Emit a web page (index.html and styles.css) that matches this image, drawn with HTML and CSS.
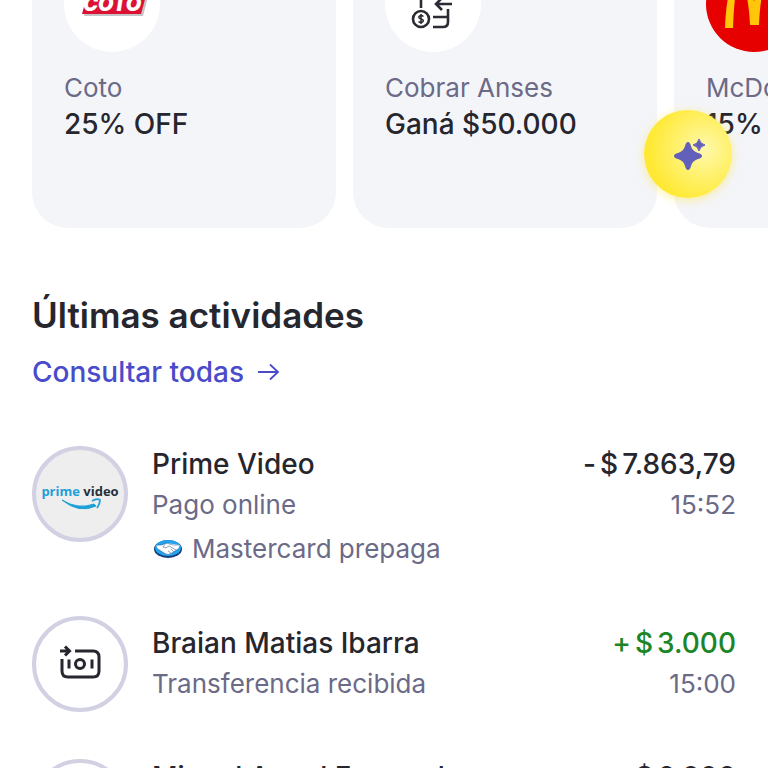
FILE: index.html
```html
<!DOCTYPE html>
<html lang="es">
    <head>
        <meta charset="utf-8">
        <meta name="viewport" content="width=device-width, initial-scale=1">
        <title>Actividades</title>
        <link rel="stylesheet" href="styles.css">
    </head>
    <body>
        <!-- promociones -->
        <section class="promos">
            <a class="card" href="#">
                <svg class="card-icon" viewBox="0 0 96 96" aria-hidden="true">
                    <circle cx="48" cy="48" r="48" fill="#fff"/>
                    <path d="M25 37H85L79 60H20Z" fill="#c3c5c9"/>
                    <path d="M24 36H83L77 58H18Z" fill="#dc1235"/>
                    <text class="coto" x="19" y="55">COTO</text>
                </svg>
                <span class="card-name">Coto</span>
                <strong class="card-offer">25% OFF</strong>
            </a>
            <a class="card" href="#">
                <svg class="card-icon" viewBox="0 0 96 96" aria-hidden="true">
                    <circle cx="48" cy="48" r="48" fill="#fff"/>
                    <g fill="none" stroke="#2b2b33" stroke-width="2.600">
                        <path d="M36 40V52"/>
                        <circle cx="36" cy="63" r="8"/>
                        <path d="M67 48H51M57 42L51 48L57 54"/>
                        <path d="M48 61H63M63 53V66Q63 71 58 71H48"/>
                        <path d="M38.500 60.500Q36 58.500 34 60.500Q33.500 62.500 36 63Q39 63.500 38 65.500Q36 67.500 33.500 65.500M36 58V68" stroke-width="1.600"/>
                    </g>
                </svg>
                <span class="card-name">Cobrar Anses</span>
                <strong class="card-offer">Ganá $50.000</strong>
            </a>
            <a class="card" href="#">
                <svg class="card-icon" viewBox="0 0 96 96" aria-hidden="true">
                    <circle cx="48" cy="48" r="48" fill="#e60000"/>
                    <path d="M19 72C20 43 25 20 34 20C42 20 46 34 48 46C50 34 54 20 62 20C71 20 76 43 77 72H69C68 46 66 27 62 27C57 27 54 46 53 69H44C43 46 39 27 34 27C30 27 28 46 27 72Z" fill="#ffc60a"/>
                </svg>
                <span class="card-name">McDonald's</span>
                <strong class="card-offer">15% OFF</strong>
            </a>
        </section>

        <main class="activity">
            <h2>Últimas actividades</h2>
            <a class="all" href="#">Consultar todas
                <svg width="24" height="20" viewBox="0 0 24 20" fill="none" stroke="currentColor" stroke-width="1.800" aria-hidden="true">
                    <path d="M2 10H22M14 2.500L22 10L14 17.500"/>
                </svg>
            </a>

            <ul class="list">
                <li class="item">
                    <svg class="avatar" viewBox="0 0 96 96" aria-hidden="true">
                        <circle cx="48" cy="48" r="46" fill="#eee" stroke="#d1d1e3" stroke-width="4"/>
                        <text class="prime" x="48" y="50" text-anchor="middle"><tspan fill="#1ba0d8">prime</tspan><tspan fill="#26303c"> video</tspan></text>
                        <path d="M30 54Q46 64 62 58L64 60Q47 68 30 54Z" fill="#1ba0d8" stroke="#1ba0d8"/>
                        <path d="M60 55Q65 52 68 54Q68 58 65 62" fill="none" stroke="#1ba0d8" stroke-width="1.800"/>
                    </svg>
                    <div class="info">
                        <h3>Prime Video</h3>
                        <p>Pago online</p>
                        <p class="method">
                            <svg width="28" height="20" viewBox="0 0 28 20" aria-hidden="true">
                                <ellipse cx="14" cy="10" rx="14" ry="9" fill="#173a78"/>
                                <ellipse cx="14" cy="9" rx="13" ry="8" fill="#20a4ec"/>
                                <path d="M2 6Q8 7 12 4Q19 5 26 6L24 10L18 14Q14 17 10 14L4 10Z" fill="#fff"/>
                                <path d="M2 6Q8 7 12 4L9 8Q12 10 15 7L22 11M4 10L10 14Q14 17 18 14L24 10M12 4Q19 7 26 6M14 12L17 14M17 10L20 13" fill="none" stroke="#25518f" stroke-width="0.500"/>
                            </svg>
                            Mastercard prepaga
                        </p>
                    </div>
                    <div class="amount">
                        <strong><span>-</span><span>$</span><span>7.863,79</span></strong>
                        <time>15:52</time>
                    </div>
                </li>
                <li class="item short">
                    <svg class="avatar" viewBox="0 0 96 96" aria-hidden="true">
                        <circle cx="48" cy="48" r="46" fill="#fff" stroke="#d1d1e3" stroke-width="4"/>
                        <g fill="none" stroke="#26262e" stroke-width="3">
                            <path d="M28 35H38M33 30.500L37.500 35L33 39.500"/>
                            <path d="M43 35H61Q67 35 67 41V55Q67 61 61 61H36Q30 61 30 55V43"/>
                            <circle cx="48" cy="48" r="4.500"/>
                            <path d="M37 43.500V52.500M60 43.500V52.500"/>
                        </g>
                    </svg>
                    <div class="info">
                        <h3>Braian Matias Ibarra</h3>
                        <p>Transferencia recibida</p>
                    </div>
                    <div class="amount income">
                        <strong><span>+</span><span>$</span><span>3.000</span></strong>
                        <time>15:00</time>
                    </div>
                </li>
                <li class="item">
                    <svg class="avatar" viewBox="0 0 96 96" aria-hidden="true">
                        <circle cx="48" cy="48" r="46" fill="#fff" stroke="#d1d1e3" stroke-width="4"/>
                    </svg>
                    <div class="info">
                        <h3>Miguel Angel Fernandez</h3>
                    </div>
                    <div class="amount">
                        <strong><span>-</span><span>$</span><span>6.000</span></strong>
                    </div>
                </li>
            </ul>
        </main>

        <button class="assistant" type="button" aria-label="Asistente">
            <svg width="36" height="36" viewBox="0 0 36 36" aria-hidden="true">
                <path d="M18 6Q20 6 21 10Q22 15 28 17Q32 18 32 20Q32 22 28 23Q22 25 21 30Q20 34 18 34Q16 34 15 30Q14 25 8 23Q4 22 4 20Q4 18 8 17Q14 15 15 10Q16 6 18 6Z" fill="#6260bb"/>
                <path d="M29 3Q30 8 35 9Q30 10 29 15Q28 10 23 9Q28 8 29 3Z" fill="#6260bb" stroke="#6260bb" stroke-linejoin="round"/>
            </svg>
        </button>
    </body>
</html>
```
FILE: styles.css
```css
*{
    margin: 0;
    padding: 0;
    box-sizing: border-box;
}
body{
    height: 100vh;
    overflow: hidden;
    background: #fff;
    color: #26262e;
    font: 500 28px/40px "Inter", "Liberation Sans", sans-serif;
}
a{
    text-decoration: none;
}
h3, strong{
    font-size: 28px;
    font-weight: 500;
}

/* tarjetas */
.promos{
    display: flex;
    gap: 17px;
    padding-left: 32px;
    overflow: hidden;
}
.card{
    flex: 0 0 304px;
    padding: 0 32px 86px;
    border-radius: 0 0 36px 36px;
    background: #f4f5f9;
    line-height: 36px;
    white-space: nowrap;
    overflow: hidden;
}
.card-icon{
    display: block;
    width: 96px;
    height: 96px;
    margin: -44px 0 18px;
}
.card-name, .card-offer{
    display: block;
    color: #26262e;
}
.card-name, .info p, time{
    color: #6b6a87;
    font-size: 26px;
    font-weight: 400;
}
.coto{
    fill: #fff;
    font: italic 900 20px "Inter", sans-serif;
}

/* actividades */
.activity{
    padding: 64px 32px 0;
}
.activity h2{
    font-size: 35px;
    font-weight: 600;
    line-height: 46px;
}
.all{
    display: inline-flex;
    align-items: center;
    gap: 12px;
    margin-top: 14px;
    color: #4a4bcb;
    line-height: 40px;
}
.list{
    display: flex;
    flex-direction: column;
    gap: 45px;
    margin-top: 52px;
    list-style: none;
}
.item{
    display: flex;
    gap: 24px;
}
.item.short{
    align-items: center;
}
.avatar{
    flex: none;
    width: 96px;
    height: 96px;
    margin-top: 2px;
}
.short .avatar{
    margin-top: 0;
}
.prime{
    font: 700 13px "Open Sans", sans-serif;
}
.info{
    flex: 1;
    min-width: 0;
}
.info p, time{
    line-height: 42px;
}
.info .method{
    display: flex;
    align-items: center;
    gap: 10px;
    line-height: 45px;
    padding-left: 2px;
}
.amount{
    display: flex;
    flex-direction: column;
    align-items: flex-end;
}
.amount strong{
    display: flex;
    gap: 4px;
}
.income strong{
    color: #1c8527;
}

/* boton flotante */
.assistant{
    position: fixed;
    top: 110px;
    right: 36px;
    display: flex;
    align-items: center;
    justify-content: center;
    width: 88px;
    height: 88px;
    border: 0;
    border-radius: 50%;
    background: radial-gradient(circle at 68% 45%, #fff8ae 0, #fff16e 35%, #ffe935 70%, #ffe52e 100%);
    box-shadow: 0 2px 10px rgba(255, 229, 50, 0.5);
}
```
